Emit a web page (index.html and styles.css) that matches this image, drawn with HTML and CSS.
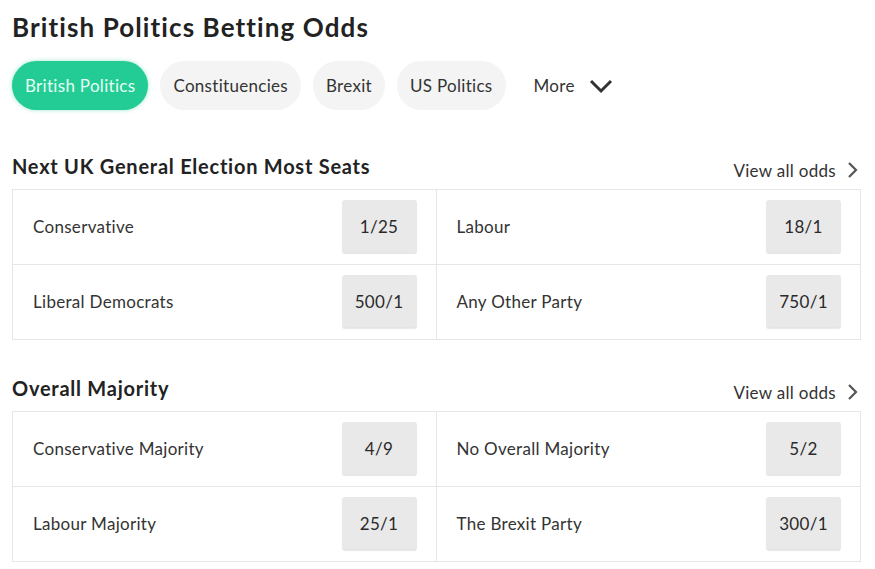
FILE: index.html
```html
<!DOCTYPE html>
<html>
<head>
<meta charset="utf-8">
<link rel="stylesheet" href="styles.css">
</head>
<body>
<div class="page">
  <h1 class="title">British Politics Betting Odds</h1>
  <nav class="tabs">
    <span class="pill active">British Politics</span>
    <span class="pill">Constituencies</span>
    <span class="pill">Brexit</span>
    <span class="pill">US Politics</span>
    <span class="more">More
      <svg class="chev-down" width="24" height="16" viewBox="0 0 24 16"><path d="M2 3 L12 13 L22 3" fill="none" stroke="#333" stroke-width="3"/></svg>
    </span>
  </nav>

  <section class="market first">
    <div class="market-head">
      <h2 class="market-title">Next UK General Election Most Seats</h2>
      <span class="view-all">View all odds
        <svg class="chev-right" width="12" height="18" viewBox="0 0 12 18"><path d="M2 2 L9 9 L2 16" fill="none" stroke="#555" stroke-width="2.2"/></svg>
      </span>
    </div>
    <div class="grid">
      <div class="cell"><span class="name">Conservative</span><span class="odds">1/25</span></div>
      <div class="cell"><span class="name">Labour</span><span class="odds">18/1</span></div>
      <div class="cell"><span class="name">Liberal Democrats</span><span class="odds">500/1</span></div>
      <div class="cell"><span class="name">Any Other Party</span><span class="odds">750/1</span></div>
    </div>
  </section>

  <section class="market">
    <div class="market-head">
      <h2 class="market-title">Overall Majority</h2>
      <span class="view-all">View all odds
        <svg class="chev-right" width="12" height="18" viewBox="0 0 12 18"><path d="M2 2 L9 9 L2 16" fill="none" stroke="#555" stroke-width="2.2"/></svg>
      </span>
    </div>
    <div class="grid">
      <div class="cell"><span class="name">Conservative Majority</span><span class="odds">4/9</span></div>
      <div class="cell"><span class="name">No Overall Majority</span><span class="odds">5/2</span></div>
      <div class="cell"><span class="name">Labour Majority</span><span class="odds">25/1</span></div>
      <div class="cell"><span class="name">The Brexit Party</span><span class="odds">300/1</span></div>
    </div>
  </section>
</div>
</body>
</html>
```
FILE: styles.css
```css
* { box-sizing: border-box; }
body {
  margin: 0;
  background: #fff;
  font-family: "Lato", "Noto Sans", sans-serif;
  color: #2a2a2a;
  letter-spacing: 0.3px;
}
.page {
  width: 875px;
  padding: 10px 14px 0 12px;
}
.title {
  margin: 0;
  font-size: 26px;
  line-height: 34px;
  font-weight: 700;
  color: #222;
  letter-spacing: 1.1px;
}
.tabs {
  display: flex;
  align-items: center;
  gap: 12px;
  margin-top: 17px;
}
.pill {
  height: 49px;
  display: flex;
  align-items: center;
  padding: 0 13px;
  border-radius: 25px;
  background: #f4f4f4;
  font-size: 17px;
  color: #333;
}
.pill.active {
  background: #22cc94;
  color: #e6fff4;
  box-shadow: 0 0 4px rgba(34, 204, 148, 0.45);
}
.more {
  display: flex;
  align-items: center;
  gap: 14px;
  margin-left: 16px;
  font-size: 17px;
  color: #333;
}
.market.first { margin-top: 44px; }
.market { margin-top: 36px; }
.market-head {
  display: flex;
  justify-content: space-between;
  align-items: center;
  height: 24px;
  margin-bottom: 11px;
}
.market-title {
  margin: 0;
  font-size: 20px;
  line-height: 24px;
  font-weight: 700;
  color: #222;
  letter-spacing: 0.75px;
}
.view-all {
  display: flex;
  align-items: center;
  gap: 11px;
  margin-top: 8px;
  margin-right: 2px;
  font-size: 17px;
  color: #333;
}
.grid {
  display: grid;
  grid-template-columns: 1fr 1fr;
  border: 1px solid #e6e6e6;
  width: 849px;
}
.cell {
  height: 75px;
  display: flex;
  align-items: center;
  justify-content: space-between;
  padding: 0 19px 2px 20px;
  border-bottom: 1px solid #e6e6e6;
}
.cell:nth-child(odd) { border-right: 1px solid #e6e6e6; }
.cell:nth-last-child(-n+2) { border-bottom: none; height: 74px; }
.name {
  font-size: 17px;
  color: #333;
}
.odds {
  width: 75px;
  height: 52px;
  display: flex;
  align-items: center;
  justify-content: center;
  background: #e9e9e9;
  border-radius: 3px;
  box-shadow: 0 2px 1px rgba(0, 0, 0, 0.1);
  font-size: 17px;
  color: #2a2a2a;
}
```
